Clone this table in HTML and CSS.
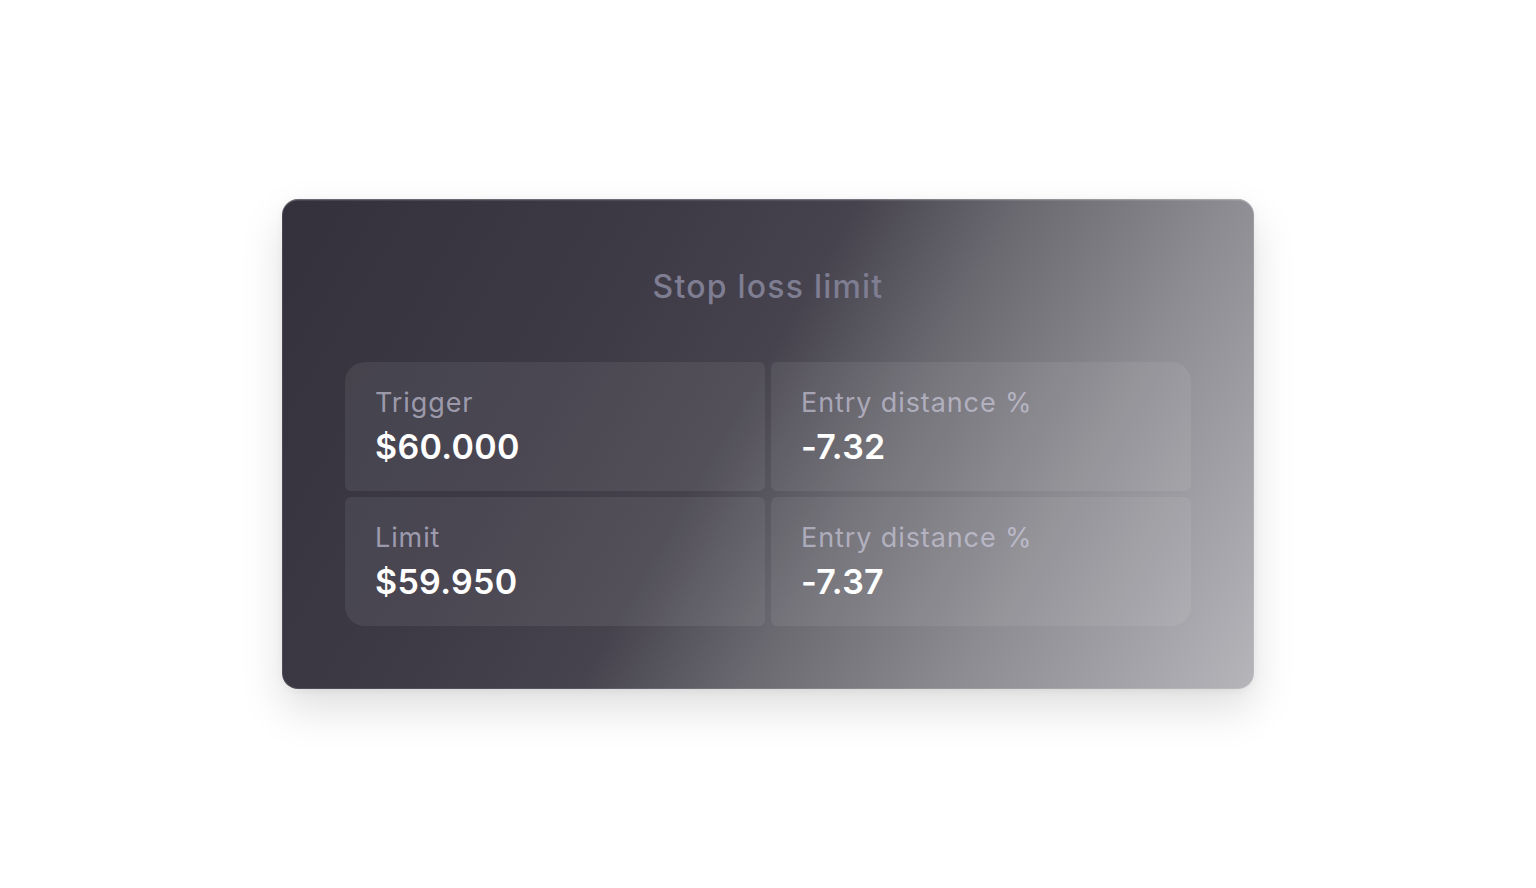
FILE: index.html
```html
<!DOCTYPE html>
<html lang="en">
<head>
<meta charset="utf-8">
<title>Stop loss limit</title>
<link rel="stylesheet" href="styles.css">
</head>
<body>
<main class="stage">
  <section class="card">
    <h1 class="title">Stop loss limit</h1>
    <div class="grid">
      <div class="cell cell-tl">
        <span class="label">Trigger</span>
        <span class="value">$60.000</span>
      </div>
      <div class="cell cell-tr">
        <span class="label">Entry distance %</span>
        <span class="value">-7.32</span>
      </div>
      <div class="cell cell-bl">
        <span class="label">Limit</span>
        <span class="value">$59.950</span>
      </div>
      <div class="cell cell-br">
        <span class="label">Entry distance %</span>
        <span class="value">-7.37</span>
      </div>
    </div>
  </section>
</main>
</body>
</html>
```
FILE: styles.css
```css
* { box-sizing: border-box; }
html, body { margin: 0; padding: 0; }
body {
  background: #ffffff;
  font-family: Inter, "Noto Sans", "Liberation Sans", sans-serif;
  width: 1536px;
  height: 888px;
  overflow: hidden;
}
.stage {
  display: flex;
  justify-content: center;
  padding-top: 199px;
}
.card {
  width: 972px;
  height: 490px;
  border-radius: 16px;
  padding: 63px 63px 63px;
  background: linear-gradient(120deg, #34313c 0%, #3d3a46 30%, #46434e 46%, #6a6970 59%, #8d8c92 76%, #b6b5ba 100%);
  box-shadow: inset 0 1.5px 0 rgba(255,255,255,0.18), inset 0 0 0 1px rgba(255,255,255,0.1), 0 20px 44px rgba(0,0,0,0.13), 0 2px 8px rgba(0,0,0,0.05);
  display: flex;
  flex-direction: column;
}
.title {
  margin: 0;
  text-align: center;
  font-size: 32px;
  font-weight: 500;
  letter-spacing: 1.2px;
  line-height: 40px;
  color: #7e7d91;
  height: 100px;
  padding-top: 5px;
}
.grid {
  display: grid;
  grid-template-columns: 420px 420px;
  grid-template-rows: 129px 129px;
  gap: 6px;
}
.cell {
  background: rgba(255,255,255,0.07);
  display: flex;
  flex-direction: column;
  justify-content: center;
  gap: 4px;
  padding: 0 30px;
  border-radius: 6px;
}
.cell-tl { border-top-left-radius: 20px; }
.cell-tr { border-top-right-radius: 20px; }
.cell-bl { border-bottom-left-radius: 20px; }
.cell-br { border-bottom-right-radius: 20px; }
.label {
  font-size: 27px;
  line-height: 36px;
  font-weight: 400;
  letter-spacing: 0.9px;
  color: rgba(214,212,232,0.62);
}
.value {
  font-size: 34px;
  line-height: 44px;
  font-weight: 600;
  letter-spacing: 0.3px;
  color: #ffffff;
}
```
